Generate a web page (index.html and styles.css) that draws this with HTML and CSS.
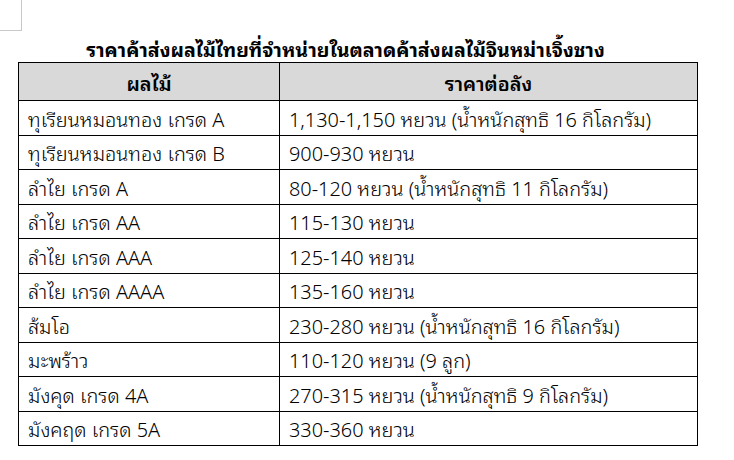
FILE: index.html
```html
<!DOCTYPE html>
<html lang="th">
<head>
<meta charset="utf-8">
<link rel="stylesheet" href="styles.css">
</head>
<body>
<div class="corner"></div>
<div class="page">
  <h1 class="title">ราคาค้าส่งผลไม้ไทยที่จำหน่ายในตลาดค้าส่งผลไม้จินหม่าเจิ้งชาง</h1>
  <table class="prices">
    <colgroup><col class="c1"><col class="c2"></colgroup>
    <thead>
      <tr><th>ผลไม้</th><th>ราคาต่อลัง</th></tr>
    </thead>
    <tbody>
      <tr><td>ทุเรียนหมอนทอง เกรด A</td><td>1,130-1,150 หยวน (น้ำหนักสุทธิ 16 กิโลกรัม)</td></tr>
      <tr><td>ทุเรียนหมอนทอง เกรด B</td><td>900-930 หยวน</td></tr>
      <tr><td>ลำไย เกรด A</td><td>80-120 หยวน (น้ำหนักสุทธิ 11 กิโลกรัม)</td></tr>
      <tr><td>ลำไย เกรด AA</td><td>115-130 หยวน</td></tr>
      <tr><td>ลำไย เกรด AAA</td><td>125-140 หยวน</td></tr>
      <tr><td>ลำไย เกรด AAAA</td><td>135-160 หยวน</td></tr>
      <tr><td>ส้มโอ</td><td>230-280 หยวน (น้ำหนักสุทธิ 16 กิโลกรัม)</td></tr>
      <tr><td>มะพร้าว</td><td>110-120 หยวน (9 ลูก)</td></tr>
      <tr><td>มังคุด เกรด 4A</td><td>270-315 หยวน (น้ำหนักสุทธิ 9 กิโลกรัม)</td></tr>
      <tr><td>มังคฤด เกรด 5A</td><td>330-360 หยวน</td></tr>
    </tbody>
  </table>
</div>
</body>
</html>
```
FILE: styles.css
```css
html, body {
  margin: 0;
  padding: 0;
  background: #ffffff;
}
body {
  font-family: "Noto Sans Thai Looped", "Noto Sans", sans-serif;
  color: #000000;
  position: relative;
  width: 734px;
  height: 460px;
  overflow: hidden;
}
.corner {
  position: absolute;
  left: 0;
  top: 0;
  width: 21px;
  height: 30px;
  border-right: 1px solid #c8c8c8;
  border-bottom: 1px solid #c8c8c8;
}
.page {
  padding: 34px 0 0 18px;
  width: 679px;
}
.title {
  margin: 0;
  padding-right: 24px;
  font-size: 19.6px;
  font-weight: bold;
  text-align: center;
  line-height: 28px;
  height: 28px;
}
.prices {
  border-collapse: collapse;
  width: 679px;
  table-layout: fixed;
  font-size: 19.9px;
}
.c1 { width: 261px; }
.c2 { width: 418px; }
.prices th, .prices td {
  border: 1px solid #000000;
  padding: 0 9px;
  white-space: nowrap;
  line-height: 24px;
}
.prices th {
  background: #d9d9d9;
  height: 37px;
  font-weight: 600;
  text-align: center;
}
.prices td {
  height: 33.5px;
  text-align: left;
  font-weight: 300;
}
```
